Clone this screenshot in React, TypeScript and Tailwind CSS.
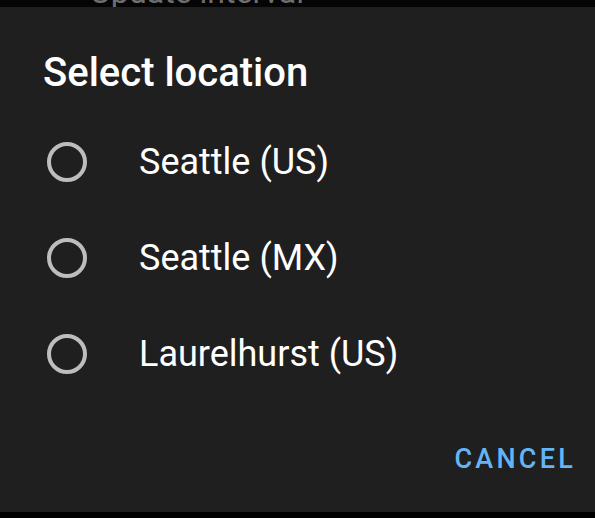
export default function App() {
  const options = ['Seattle (US)', 'Seattle (MX)', 'Laurelhurst (US)'];

  return (
    <div className="w-[595px] h-[518px] bg-black flex flex-col overflow-hidden" style={{ fontFamily: 'Roboto, "Liberation Sans", sans-serif' }}>
      {/* screen behind the dialog, mostly covered */}
      <div className="h-[7px] overflow-hidden bg-[#050505]">
        <div className="-mt-[24px] pl-[90px] text-[32px] leading-[32px] text-[#6f6f6f]">Update interval</div>
      </div>

      <div className="h-[505px] bg-[#1f1f1f] flex flex-col">
        <h2 className="pt-[44px] pl-[43px] text-[40px] leading-[44px] font-medium text-white">Select location</h2>

        <div className="mt-[19px] flex flex-col">
          {options.map((o) => (
            <div key={o} className="h-[96px] flex items-center pl-[47px]">
              <span className="w-[40px] h-[40px] rounded-full border-[4px] border-[#bdbdbd]" />
              <span className="ml-[52px] text-[36px] text-white">{o}</span>
            </div>
          ))}
        </div>

        <div className="mt-auto mb-[33px] flex justify-end pr-[19px]">
          <button className="text-[27px] font-medium tracking-[0.12em] text-[#64b5f6]">CANCEL</button>
        </div>
      </div>
    </div>
  );
}
